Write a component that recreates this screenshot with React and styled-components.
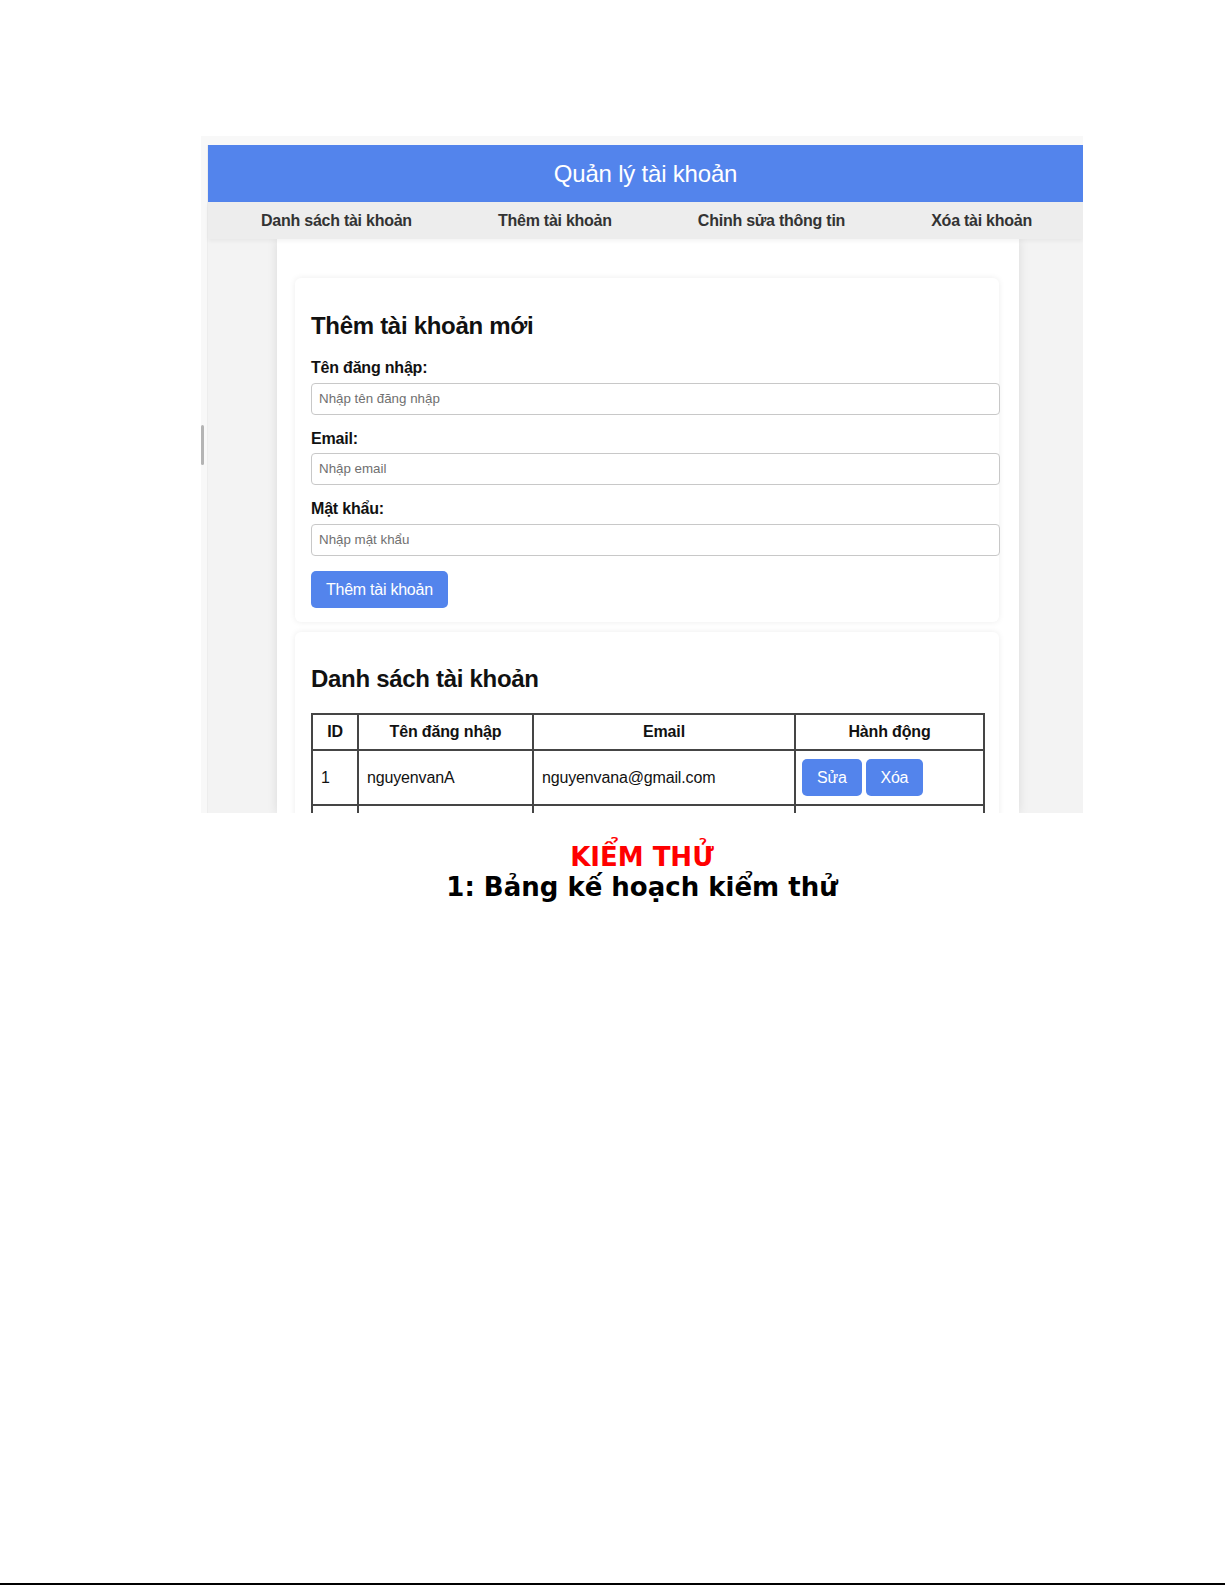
import React from "react";
import styled, { createGlobalStyle } from "styled-components";

const Global = createGlobalStyle`
  html, body { margin: 0; padding: 0; background: #ffffff; }
  * { box-sizing: border-box; }
`;

const Page = styled.div`
  width: 1225px;
  height: 1585px;
  display: flex;
  flex-direction: column;
  padding-top: 136px;
  background: #ffffff;
`;

const Shot = styled.div`
  position: relative;
  margin-left: 201px;
  width: 882px;
  height: 677px;
  overflow: hidden;
  background: #f8f8f8;
  padding: 9px 0 0 6px;
  flex-shrink: 0;
`;

const ScrollThumb = styled.div`
  position: absolute;
  left: 0;
  top: 289px;
  width: 3px;
  height: 40px;
  border-radius: 2px;
  background: #b4b4b4;
`;

const AppPage = styled.div`
  width: 876px;
  height: 100%;
  background: #f3f3f3;
  display: flex;
  flex-direction: column;
  font-family: "Liberation Sans", Arial, sans-serif;
  border-left: 1px solid #ededed;
`;

const Header = styled.header`
  height: 57px;
  flex-shrink: 0;
  background: #5384ec;
  color: #ffffff;
  display: flex;
  align-items: center;
  justify-content: center;
  font-size: 24px;
  font-weight: normal;
  letter-spacing: -0.2px;
`;

const Nav = styled.nav`
  position: relative;
  z-index: 1;
  height: 37px;
  flex-shrink: 0;
  background: #ededed;
  display: flex;
  align-items: center;
  justify-content: space-around;
  padding: 0 8px 0 10px;
  box-shadow: 0 2px 4px rgba(0, 0, 0, 0.05);
`;

const NavItem = styled.span`
  font-size: 16px;
  font-weight: bold;
  color: #333333;
  letter-spacing: -0.25px;
`;

const Main = styled.main`
  flex: 1;
  min-height: 0;
`;

const Container = styled.div`
  margin-left: 69px;
  width: 742px;
  height: 100%;
  background: #ffffff;
  box-shadow: 0 0 10px rgba(0, 0, 0, 0.1);
  padding: 39px 20px 0 18px;
`;

const Card = styled.section`
  background: #ffffff;
  border-radius: 6px;
  box-shadow: 0 0 6px rgba(0, 0, 0, 0.08);
  padding: 14px 16px 14px;
  margin-bottom: 10px;
`;

const Title = styled.h2`
  font-size: 24px;
  font-weight: bold;
  color: #111111;
  margin: 19.9px 0;
  line-height: 27.6px;
  letter-spacing: -0.3px;
`;

const Label = styled.label`
  display: block;
  font-size: 16px;
  font-weight: bold;
  color: #111111;
  line-height: 18.4px;
  margin-bottom: 5px;
  letter-spacing: -0.2px;
`;

const Input = styled.input`
  display: block;
  box-sizing: content-box;
  width: 100%;
  height: 14px;
  line-height: 14px;
  padding: 8px 8px 8px 7px;
  border: 1px solid #c8c8c8;
  border-radius: 4px;
  font-family: "Liberation Sans", Arial, sans-serif;
  font-size: 13.33px;
  margin: 0 0 15px 0;
  background: #ffffff;
  &::placeholder { color: #707070; }
`;

const Button = styled.button`
  background: #5384ec;
  color: #ffffff;
  border: none;
  border-radius: 5px;
  padding: 10px 15px;
  font-family: "Liberation Sans", Arial, sans-serif;
  font-size: 16px;
  line-height: 17px;
  letter-spacing: -0.25px;
  margin-right: ${(p) => (p.$gap ? "4px" : "0")};
  cursor: pointer;
`;

const Table = styled.table`
  width: 100%;
  border-collapse: collapse;
  table-layout: fixed;
  border: 2px solid #454545;
  font-size: 16px;
`;

const Th = styled.th`
  border: 2px solid #454545;
  padding: 8px;
  text-align: center;
  font-weight: bold;
  color: #111111;
  line-height: 18.4px;
  letter-spacing: -0.15px;
`;

const Td = styled.td`
  border: 2px solid #454545;
  padding: ${(p) => (p.$actions ? "8px 6px" : "8px")};
  height: 53px;
  text-align: left;
  color: #111111;
  line-height: 18.4px;
  white-space: nowrap;
  letter-spacing: -0.15px;
`;

const Caption = styled.div`
  margin: 30px 0 0 201px;
  width: 882px;
  text-align: center;
  font-family: "DejaVu Sans", sans-serif;
  font-weight: bold;
  font-size: 26px;
  line-height: 29.5px;
`;

const CaptionLine = styled.div`
  color: ${(p) => p.$color || "#000000"};
`;

const BottomRule = styled.div`
  margin-top: auto;
  width: 100%;
  height: 2px;
  background: #000000;
`;

const accounts = [
  { id: 1, user: "nguyenvanA", email: "nguyenvana@gmail.com" },
];

export default function App() {
  return (
    <>
      <Global />
      <Page>
        <Shot>
          <ScrollThumb />
          <AppPage>
            <Header>Quản lý tài khoản</Header>
            <Nav>
              <NavItem>Danh sách tài khoản</NavItem>
              <NavItem>Thêm tài khoản</NavItem>
              <NavItem>Chỉnh sửa thông tin</NavItem>
              <NavItem>Xóa tài khoản</NavItem>
            </Nav>
            <Main>
              <Container>
                <Card>
                  <Title>Thêm tài khoản mới</Title>
                  <Label>Tên đăng nhập:</Label>
                  <Input placeholder="Nhập tên đăng nhập" />
                  <Label>Email:</Label>
                  <Input placeholder="Nhập email" />
                  <Label>Mật khẩu:</Label>
                  <Input placeholder="Nhập mật khẩu" type="password" />
                  <Button>Thêm tài khoản</Button>
                </Card>
                <Card>
                  <Title>Danh sách tài khoản</Title>
                  <Table>
                    <colgroup>
                      <col style={{ width: 46 }} />
                      <col style={{ width: 175 }} />
                      <col style={{ width: 262 }} />
                      <col style={{ width: 189 }} />
                    </colgroup>
                    <thead>
                      <tr>
                        <Th>ID</Th>
                        <Th>Tên đăng nhập</Th>
                        <Th>Email</Th>
                        <Th>Hành động</Th>
                      </tr>
                    </thead>
                    <tbody>
                      {accounts.map((a) => (
                        <tr key={a.id}>
                          <Td>{a.id}</Td>
                          <Td>{a.user}</Td>
                          <Td>{a.email}</Td>
                          <Td $actions>
                            <Button $gap>Sửa</Button>
                            <Button>Xóa</Button>
                          </Td>
                        </tr>
                      ))}
                      <tr>
                        <Td />
                        <Td />
                        <Td />
                        <Td $actions />
                      </tr>
                    </tbody>
                  </Table>
                </Card>
              </Container>
            </Main>
          </AppPage>
        </Shot>
        <Caption>
          <CaptionLine $color="#ff0000">KIỂM THỬ</CaptionLine>
          <CaptionLine>1: Bảng kế hoạch kiểm thử</CaptionLine>
        </Caption>
        <BottomRule />
      </Page>
    </>
  );
}
